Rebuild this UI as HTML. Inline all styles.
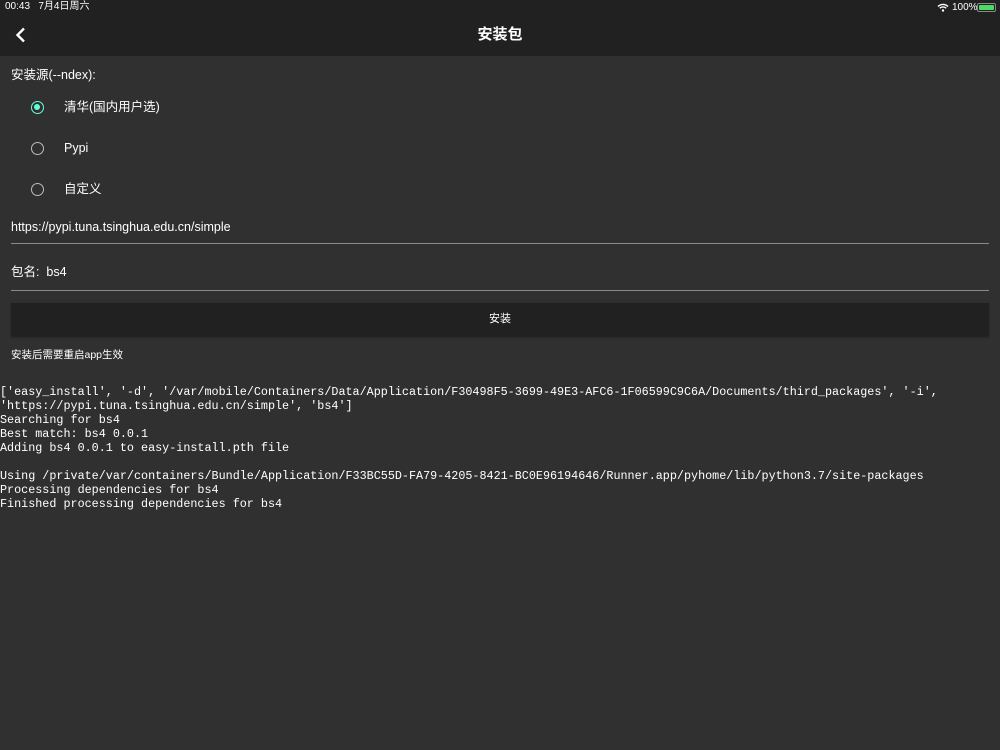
<!DOCTYPE html>
<html><head><meta charset="utf-8"><style>
*{margin:0;padding:0;box-sizing:border-box}
body{width:1000px;height:750px;background:#303030;color:#fff;font-family:"Liberation Sans","Noto Sans CJK SC",sans-serif;position:relative;overflow:hidden}
.abs{position:absolute;white-space:nowrap}
#top{position:absolute;left:0;top:0;width:1000px;height:56px;background:#212121}
.radio{position:absolute;left:31px;width:13px;height:13px;border:1.5px solid #bdbdbd;border-radius:50%}
.radio.on{border-color:#64ffda}
.radio.on::after{content:"";position:absolute;left:2px;top:2px;width:6px;height:6px;border-radius:50%;background:#64ffda}
.line{position:absolute;left:11px;width:978px;height:1px;background:#8a8a8a}
pre{position:absolute;left:0;top:385px;font-family:"Liberation Mono",monospace;font-size:11.75px;line-height:14px;color:#fff}
.t{font-size:12.5px;line-height:16px;height:16px}
</style></head><body>
<div id="top"></div>
<div class="abs" style="left:5px;top:1px;font-size:10px;line-height:12px">00:43&nbsp;&nbsp; 7月4日周六</div>
<svg class="abs" style="left:937px;top:3px" width="12" height="9" viewBox="0 0 12 9"><path d="M1 3.5a7 7 0 0 1 10 0M2.8 5.3a4.5 4.5 0 0 1 6.4 0" stroke="#fff" stroke-width="1.4" fill="none"/><circle cx="6" cy="7.5" r="1.2" fill="#fff"/></svg>
<div class="abs" style="left:952px;top:2px;font-size:10px;line-height:12px">100%</div>
<div class="abs" style="left:977px;top:3px;width:19px;height:9px;border:1px solid #888;border-radius:2px;padding:1px"><div style="width:100%;height:100%;background:#4cd964;border-radius:1px"></div></div>
<svg class="abs" style="left:14px;top:27px" width="14" height="16" viewBox="0 0 14 16"><path d="M10 1.5L3.5 8L10 14.5" stroke="#fff" stroke-width="2.4" fill="none"/></svg>
<div class="abs" style="left:0;width:1000px;text-align:center;top:26px;font-size:15px;line-height:18px;font-weight:bold">安装包</div>
<div class="abs t" style="left:11px;top:67px">安装源(--ndex):</div>
<div class="radio on" style="top:101px"></div><div class="abs t" style="left:64px;top:99px">清华(国内用户选)</div>
<div class="radio" style="top:142px"></div><div class="abs t" style="left:64px;top:140px">Pypi</div>
<div class="radio" style="top:183px"></div><div class="abs t" style="left:64px;top:181px">自定义</div>
<div class="abs t" style="left:11px;top:219px">https://pypi.tuna.tsinghua.edu.cn/simple</div>
<div class="line" style="top:243px"></div>
<div class="abs t" style="left:11px;top:264px">包名:&nbsp; bs4</div>
<div class="line" style="top:290px"></div>
<div class="abs" style="left:11px;top:303px;width:978px;height:33px;background:#212121;box-shadow:0 1px 2px rgba(0,0,0,.4);text-align:center;line-height:33px;font-size:11px">安装</div>
<div class="abs" style="left:11px;top:348px;font-size:10.5px;line-height:14px">安装后需要重启app生效</div>
<pre>['easy_install', '-d', '/var/mobile/Containers/Data/Application/F30498F5-3699-49E3-AFC6-1F06599C9C6A/Documents/third_packages', '-i',
'https://pypi.tuna.tsinghua.edu.cn/simple', 'bs4']
Searching for bs4
Best match: bs4 0.0.1
Adding bs4 0.0.1 to easy-install.pth file

Using /private/var/containers/Bundle/Application/F33BC55D-FA79-4205-8421-BC0E96194646/Runner.app/pyhome/lib/python3.7/site-packages
Processing dependencies for bs4
Finished processing dependencies for bs4</pre>
</body></html>
